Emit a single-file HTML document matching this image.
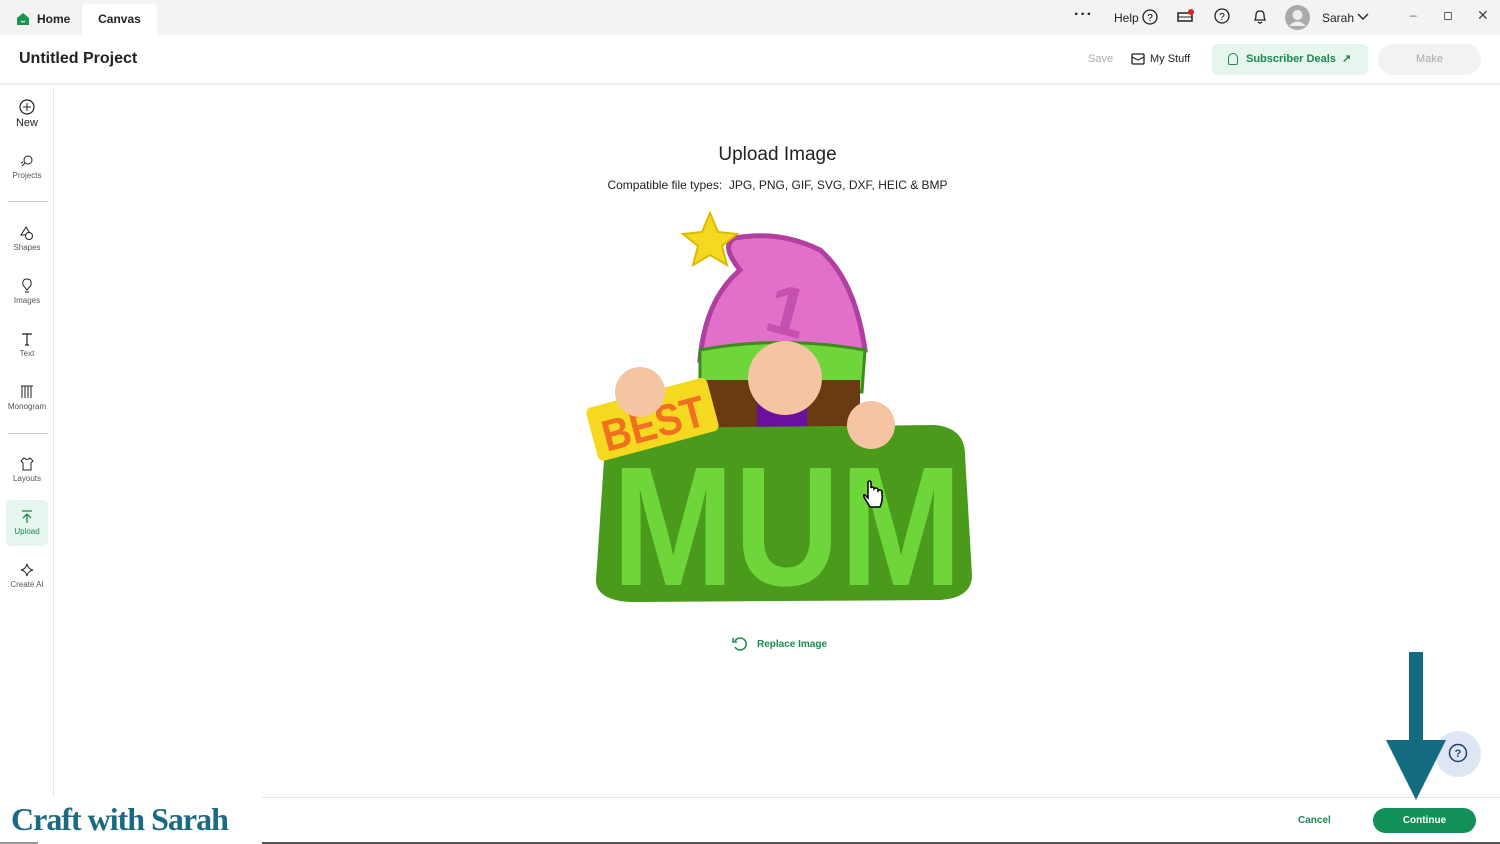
<!DOCTYPE html>
<html><head><meta charset="utf-8"><style>
*{margin:0;padding:0;box-sizing:border-box}
body{width:1500px;height:844px;overflow:hidden;background:#fff;font-family:"Liberation Sans",sans-serif;position:relative;color:#222}
.top{position:absolute;left:0;top:0;width:1500px;height:35px;background:#f3f3f3}
.tab{position:absolute;top:4px;height:31px;font-size:12px;font-weight:bold;line-height:31px}
.hdr{position:absolute;top:35px;left:0;width:1500px;height:50px;background:#fff;border-bottom:2px solid #eee}
.side{position:absolute;left:0;top:87px;width:54px;height:710px;border-right:1px solid #e6e6e6}
.si{position:absolute;left:0;width:54px;text-align:center;font-size:8px;color:#555}
.si svg{display:block;margin:0 auto 2px}
.abs{position:absolute}
</style></head><body>
<div class="top"></div>
<div class="tab" style="left:14px;width:70px;"><svg class="abs" style="left:2px;top:8px" width="14" height="14" viewBox="0 0 14 14"><path d="M1 6 L7 1 L13 6 V13 H1Z" fill="#1a9550"/><path d="M5 9 Q7 11 9 9" stroke="#fff" fill="none"/></svg><span style="position:absolute;left:23px">Home</span></div>
<div class="tab" style="left:82px;width:75px;background:#fff;text-align:center;border-radius:4px 4px 0 0">Canvas</div>
<div class="abs" style="left:1074px;top:6px;font-size:16px;font-weight:bold;letter-spacing:1px">···</div>
<div class="abs" style="left:1114px;top:11px;font-size:12px">Help</div>
<svg class="abs" style="left:1142px;top:9px" width="16" height="16"><circle cx="8" cy="8" r="7" fill="none" stroke="#222" stroke-width="1.3"/><text x="8" y="12" font-size="10" text-anchor="middle" font-family="Liberation Sans">?</text></svg>
<svg class="abs" style="left:1177px;top:8px" width="18" height="16"><rect x="1" y="5" width="14" height="8" fill="none" stroke="#222" stroke-width="1.5"/><line x1="1" y1="9" x2="15" y2="9" stroke="#222"/><circle cx="14" cy="4" r="3" fill="#d22"/></svg>
<svg class="abs" style="left:1213px;top:8px" width="18" height="18"><circle cx="9" cy="8" r="7" fill="none" stroke="#222" stroke-width="1.3"/><text x="9" y="12" font-size="10" text-anchor="middle">?</text></svg>
<svg class="abs" style="left:1252px;top:8px" width="16" height="18"><path d="M3 12 Q4 10 4 7 Q4 3 8 3 Q12 3 12 7 Q12 10 13 12Z M6 14 Q8 16 10 14" fill="none" stroke="#222" stroke-width="1.3"/></svg>
<svg class="abs" style="left:1285px;top:5px" width="25" height="25"><circle cx="12.5" cy="12.5" r="12.5" fill="#aaa"/><circle cx="12.5" cy="10" r="5" fill="#eee"/><path d="M4 21 Q12.5 12 21 21" fill="#eee"/></svg>
<div class="abs" style="left:1322px;top:11px;font-size:12px">Sarah</div>
<svg class="abs" style="left:1357px;top:13px" width="12" height="8"><path d="M1 1 L6 6 L11 1" fill="none" stroke="#222" stroke-width="1.4"/></svg>
<div class="abs" style="left:1410px;top:8px;font-size:12px;color:#666">–</div>
<div class="abs" style="left:1444px;top:12px;width:8px;height:8px;border:1px solid #666"></div>
<div class="abs" style="left:1477px;top:7px;font-size:14px;color:#444">✕</div>

<div class="hdr">
<div class="abs" style="left:19px;top:15px;font-size:16px;font-weight:bold;color:#222">Untitled Project</div>
<div class="abs" style="left:1088px;top:18px;font-size:11px;color:#aaa">Save</div>
<svg class="abs" style="left:1131px;top:17px" width="14" height="13"><rect x="1" y="2" width="12" height="10" rx="1" fill="none" stroke="#222" stroke-width="1.3"/><path d="M1 5 L7 8 L13 5" fill="none" stroke="#222" stroke-width="1.2"/></svg>
<div class="abs" style="left:1150px;top:18px;font-size:11px">My Stuff</div>
<div class="abs" style="left:1212px;top:9px;width:156px;height:31px;background:#e6f5ed;border-radius:5px;font-size:11px;font-weight:bold;color:#1a8a4f;line-height:31px;padding-left:34px">Subscriber Deals &nbsp;↗</div>
<div class="abs" style="left:1228px;top:18px;width:10px;height:12px;border:1.5px solid #1a8a4f;border-radius:5px 5px 2px 2px"></div>
<div class="abs" style="left:1378px;top:9px;width:103px;height:31px;background:#f2f2f2;border-radius:16px;font-size:11px;color:#aaa;text-align:center;line-height:31px">Make</div>
</div>

<div class="side">
<div class="si" style="top:12px;font-size:11px;color:#222"><svg width="16" height="16"><circle cx="8" cy="8" r="7" fill="none" stroke="#222" stroke-width="1.2"/><path d="M8 4V12M4 8H12" stroke="#222"/></svg>New</div>
<div class="si" style="top:66px"><svg width="16" height="16"><circle cx="9" cy="7" r="4" fill="none" stroke="#222"/><path d="M3 13 L6 10M2 10L4 9" stroke="#222"/></svg>Projects</div>
<div style="position:absolute;left:8px;top:114px;width:40px;border-top:1px solid #ccc"></div>
<div class="si" style="top:138px"><svg width="16" height="16"><path d="M7 2 L2 10 H12Z" fill="none" stroke="#222"/><circle cx="10" cy="11" r="3.5" fill="#fff" stroke="#222"/></svg>Shapes</div>
<div class="si" style="top:191px"><svg width="16" height="16"><path d="M8 1 Q13 1 12 7 L8 12 L4 7 Q3 1 8 1Z" fill="none" stroke="#222"/><path d="M6 14H10" stroke="#222"/></svg>Images</div>
<div class="si" style="top:244px"><svg width="16" height="16"><path d="M3 3H13M8 3V14M6 14H10" stroke="#222" stroke-width="1.2"/></svg>Text</div>
<div class="si" style="top:297px"><svg width="16" height="16"><path d="M2 2H14M3 2V14M6 2V14M9 2V14M12 2V14" stroke="#222"/></svg>Monogram</div>
<div style="position:absolute;left:8px;top:346px;width:40px;border-top:1px solid #ccc"></div>
<div class="si" style="top:369px"><svg width="16" height="16"><path d="M5 2 L2 5 L4 7 V14 H12 V7 L14 5 L11 2 Q8 5 5 2Z" fill="none" stroke="#222"/></svg>Layouts</div>
<div style="position:absolute;left:6px;top:413px;width:42px;height:46px;background:#e6f5ed;border-radius:5px"></div>
<div class="si" style="top:422px;color:#1a8a4f"><svg width="16" height="16"><path d="M3 2H13M8 14V5M4 9L8 5L12 9" fill="none" stroke="#1a8a4f" stroke-width="1.3"/></svg>Upload</div>
<div class="si" style="top:475px"><svg width="16" height="16"><path d="M8 2 Q9 7 14 8 Q9 9 8 14 Q7 9 2 8 Q7 7 8 2Z" fill="none" stroke="#222"/></svg>Create AI</div>
</div>

<div class="abs" style="left:0;top:144px;width:1555px;text-align:center;font-size:19px;color:#222">Upload Image</div>
<div class="abs" style="left:0;top:178px;width:1555px;text-align:center;font-size:12px;color:#222">Compatible file types:&nbsp; JPG, PNG, GIF, SVG, DXF, HEIC &amp; BMP</div>

<svg class="abs" style="left:575px;top:205px" width="410" height="405" viewBox="575 205 410 405">
<path d="M700 360 Q705 300 740 270 Q720 245 735 238 Q780 230 820 250 Q855 280 865 350 Z" fill="#e070c8" stroke="#b040a0" stroke-width="5"/>
<text x="770" y="330" font-size="70" font-weight="bold" fill="#c650b0" font-family="Liberation Sans" transform="rotate(15 770 300)">1</text>
<polygon points="710,213 718,232 737,234 722,246 727,265 710,255 693,265 698,246 683,234 702,232" fill="#f5d820" stroke="#e0b800" stroke-width="2"/>
<path d="M700 350 Q780 335 865 350 L862 392 L700 392Z" fill="#6ed63a" stroke="#3d8a1e" stroke-width="3"/>
<rect x="705" y="380" width="155" height="55" fill="#6a3a10"/>
<rect x="757" y="395" width="50" height="40" fill="#6a0fa0"/>
<circle cx="785" cy="378" r="37" fill="#f5c4a2"/>
<path d="M605 445 Q610 425 640 428 L935 425 Q965 428 965 455 L972 575 Q972 598 940 600 L630 602 Q596 600 596 580Z" fill="#4a9a1c"/>
<text x="612" y="585" font-size="170" font-weight="bold" fill="#6ed63a" font-family="Liberation Sans" textLength="350" lengthAdjust="spacingAndGlyphs">MUM</text>
<g transform="rotate(-15 648 420)"><rect x="590" y="393" width="125" height="55" rx="6" fill="#f5d820"/><text x="600" y="440" font-size="44" font-weight="bold" fill="#f07020" font-family="Liberation Sans" textLength="105" lengthAdjust="spacingAndGlyphs">BEST</text></g>
<circle cx="640" cy="392" r="25" fill="#f5c4a2"/>
<circle cx="871" cy="425" r="24" fill="#f5c4a2"/>
</svg>
<svg class="abs" style="left:862px;top:480px" width="24" height="32"><path d="M6 2 V18 L3 15 Q1 14 2 17 L8 27 H18 Q21 20 20 14 V11 Q18 9 16 11 V9 Q14 7 12 9 V8 Q10 6 9 8 V2 Q7.5 0 6 2Z" fill="#fff" stroke="#000" stroke-width="1.5"/></svg>

<svg class="abs" style="left:731px;top:636px" width="18" height="16"><path d="M4 5 A6 6 0 1 1 4 11" fill="none" stroke="#1a8a4f" stroke-width="1.5"/><path d="M2 2 V6 H6" fill="none" stroke="#1a8a4f" stroke-width="1.5"/></svg>
<div class="abs" style="left:757px;top:639px;font-size:10px;font-weight:bold;color:#1a8a4f">Replace Image</div>

<div class="abs" style="left:54px;top:797px;width:1446px;border-top:1px solid #e6e6e6"></div>
<div class="abs" style="left:1298px;top:815px;font-size:10px;font-weight:bold;color:#1a8a4f">Cancel</div>
<div class="abs" style="left:1373px;top:808px;width:103px;height:25px;background:#12905a;border-radius:13px;color:#fff;font-size:10px;font-weight:bold;text-align:center;line-height:25px">Continue</div>
<div class="abs" style="left:1435px;top:731px;width:46px;height:46px;border-radius:50%;background:#dfe6f3"></div>
<svg class="abs" style="left:1447px;top:743px" width="22" height="22"><circle cx="11" cy="10" r="8.5" fill="none" stroke="#1e3f70" stroke-width="1.5"/><text x="11" y="14" font-size="11" text-anchor="middle" fill="#1e3f70" font-weight="bold">?</text></svg>
<svg class="abs" style="left:1385px;top:652px" width="62" height="150"><rect x="24" y="0" width="14" height="92" fill="#156c80"/><polygon points="1,88 61,88 31,148" fill="#156c80"/></svg>
<div class="abs" style="left:0;top:797px;width:262px;height:47px;background:#fff"></div>
<div class="abs" style="left:11px;top:801px;font-family:'Liberation Serif',serif;font-size:32px;font-weight:bold;color:#1b6a82;letter-spacing:-1px">Craft with Sarah</div>
<div class="abs" style="left:262px;top:842px;width:1238px;height:2px;background:#555"></div>
<div class="abs" style="left:0;top:842px;width:38px;height:2px;background:#999"></div>
</body></html>
